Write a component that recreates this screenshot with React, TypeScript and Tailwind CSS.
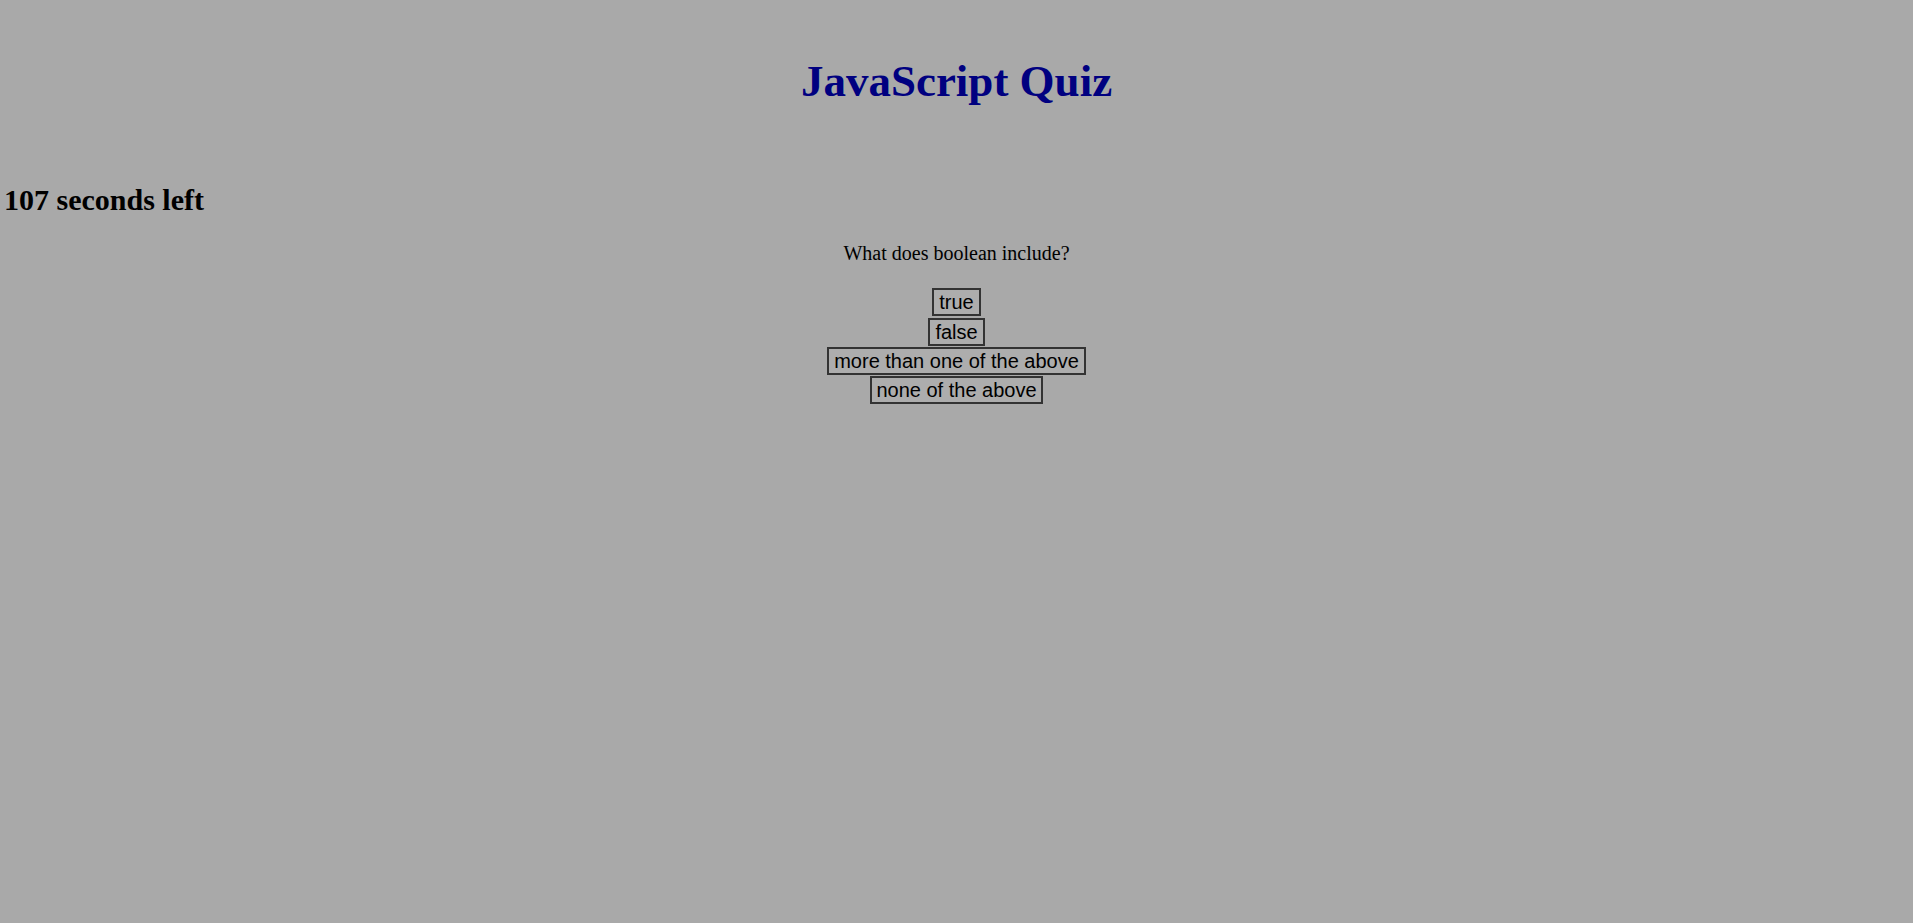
import React, { useState } from "react";

const answers = ["true", "false", "more than one of the above", "none of the above"];

export default function App() {
    const [seconds] = useState(107);

    return (
        <main className="min-h-screen w-full bg-[#a9a9a9] text-black" style={{ minHeight: "923px" }}>
            <h1 className="pt-[59px] text-center font-['Liberation_Serif',serif] text-[45px] font-bold leading-none text-[#000080]">
                JavaScript Quiz
            </h1>

            <h2 className="mt-[81px] pl-[4px] font-['Liberation_Serif',serif] text-[30px] font-bold leading-none">
                {seconds} seconds left
            </h2>

            <p className="mt-[28px] text-center font-['Liberation_Serif',serif] text-[20px] leading-none">
                What does boolean include?
            </p>

            <div className="mt-[25.4px] flex flex-col items-center gap-[1.2px]">
                {answers.map((a) => (
                    <button
                        key={a}
                        className="flex h-[28px] items-center border-[2.4px] border-[#333333] bg-[#adadad] px-[4.9px] font-['Liberation_Sans',sans-serif] text-[20px] leading-none text-black"
                    >
                        {a}
                    </button>
                ))}
            </div>
        </main>
    );
}
